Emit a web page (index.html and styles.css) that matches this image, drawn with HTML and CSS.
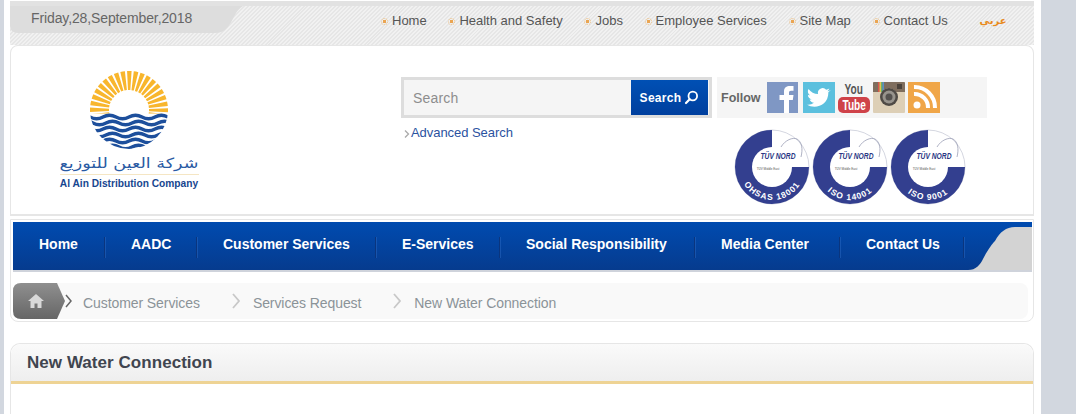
FILE: index.html
```html
<!DOCTYPE html>
<html lang="en">
<head>
<meta charset="utf-8">
<title>New Water Connection</title>
<link rel="stylesheet" href="styles.css">
</head>
<body>
<div class="page">
<div class="sheet">
  <div class="topstrip"></div>
  <div class="topbar">
    <div class="datetab">Friday,28,September,2018</div>
    <nav class="toplinks">
      <a class="toplink"><i class="bullet"></i>Home</a>
      <a class="toplink"><i class="bullet"></i>Health and Safety</a>
      <a class="toplink"><i class="bullet"></i>Jobs</a>
      <a class="toplink"><i class="bullet"></i>Employee Services</a>
      <a class="toplink"><i class="bullet"></i>Site Map</a>
      <a class="toplink"><i class="bullet"></i>Contact Us</a>
      <a class="arabic" lang="ar">عربي</a>
    </nav>
  </div>

  <header class="headcard">
    <div class="logocol">
      <svg class="logo" width="160" height="130" viewBox="0 0 160 130">
        <defs>
          <clipPath id="sunclip"><rect x="30" y="0" width="100" height="48.500"/></clipPath>
          <clipPath id="waveclip"><circle cx="79" cy="45" r="39"/></clipPath>
        </defs>
        <circle cx="79" cy="45" r="29.500" fill="none" stroke="#f8b62d" stroke-width="19" stroke-dasharray="3.500 1.650" stroke-dashoffset="1.750" clip-path="url(#sunclip)"/>
        <g clip-path="url(#waveclip)" fill="none" stroke="#1d4f9c" stroke-width="3.300">
          <path d="M27 52q6.500-3.500 13 0t13 0 13 0 13 0 13 0 13 0 13 0 13 0"/>
          <path d="M30 58q6.500-3.500 13 0t13 0 13 0 13 0 13 0 13 0 13 0 13 0"/>
          <path d="M27 64q6.500-3.500 13 0t13 0 13 0 13 0 13 0 13 0 13 0 13 0"/>
          <path d="M30 70q6.500-3.500 13 0t13 0 13 0 13 0 13 0 13 0 13 0 13 0"/>
          <path d="M27 76q6.500-3.500 13 0t13 0 13 0 13 0 13 0 13 0 13 0 13 0"/>
          <path d="M30 82q6.500-3.500 13 0t13 0 13 0 13 0 13 0 13 0 13 0 13 0"/>
        </g>
        <text class="logo-ar" x="79" y="103" text-anchor="middle" lang="ar" direction="rtl" textLength="139" lengthAdjust="spacingAndGlyphs">شركة العين للتوزيع</text>
        <rect x="10" y="109" width="139" height="1" fill="#f5e6c4"/>
        <text class="logo-en" x="79" y="122" text-anchor="middle">Al Ain Distribution Company</text>
      </svg>
    </div>
    <div class="searchcol">
      <form class="searchbox">
        <span class="searchfield">Search</span>
        <span class="searchbtn">Search
          <svg width="15" height="15" viewBox="0 0 15 15"><circle cx="8.800" cy="6" r="4.300" fill="none" stroke="#fff" stroke-width="1.800"/><path d="M5.700 9.200 2 13" stroke="#fff" stroke-width="2.200" stroke-linecap="round"/></svg>
        </span>
      </form>
      <a class="advanced"><svg class="advchev" width="6" height="8" viewBox="0 0 6 8"><path d="M1 .5 4.500 4 1 7.500" fill="none" stroke="#aaa" stroke-width="1.300"/></svg>Advanced Search</a>
    </div>
    <div class="socialcol">
      <div class="follow">
        <span class="followlabel">Follow</span>
        <svg class="soc" width="31" height="31" viewBox="0 0 31 31"><rect width="31" height="31" fill="#7f97c4"/><path d="M17 31V18h-4.500v-5H17V9.500C17 5.500 19.500 4 23 4h3.500v4.800H24c-1.500 0-2 .7-2 2V13h4.500l-.7 5H22v13z" fill="#fff"/></svg>
        <svg class="soc soc-tw" width="32" height="31" viewBox="0 0 32 31"><rect width="32" height="31" fill="#5cc0de"/><path d="M27 8.500c-1 .5-1.800.7-2.800.8 1-.6 1.800-1.500 2.100-2.700-1 .6-2 1-3.100 1.200a4.700 4.700 0 0 0-8.100 4.300C11.300 12 7.700 10 5.500 7c-1.300 2.100-.6 4.900 1.500 6.300-.8 0-1.500-.2-2.100-.6 0 2.300 1.600 4.300 3.800 4.700-.7.200-1.400.2-2.100.1.600 1.900 2.400 3.200 4.400 3.300-2 1.500-4.300 2.200-6.900 1.900 7 4.400 21.400 2 21.300-12.600 1-.6 1.800-1.400 2.600-2.100z" fill="#fff"/></svg>
        <span class="yt"><span class="yt-you">You</span><span class="yt-tube"><span class="yt-tubetext">Tube</span></span></span>
        <svg class="soc soc-ig" width="32" height="31" viewBox="0 0 32 31"><rect width="32" height="31" rx="1" fill="#ddcfb6"/><path d="M0 1q0-1 1-1h30q1 0 1 1v9H23a8.500 8.500 0 0 0-14 0H0z" fill="#7f6e5e"/><rect x="5" y="0" width="1.500" height="10" fill="#d9534f"/><rect x="6.500" y="0" width="1.500" height="10" fill="#e9c04c"/><rect x="8" y="0" width="1.500" height="10" fill="#6cb36a"/><rect x="9.500" y="0" width="1.500" height="10" fill="#5a8fc7"/><circle cx="16" cy="15" r="9" fill="#4f4a45"/><circle cx="16" cy="15" r="6.500" fill="#97938c"/><circle cx="16" cy="15" r="3.500" fill="#54514e"/><rect x="24" y="2" width="5" height="5" fill="#4a423b"/></svg>
        <svg class="soc soc-rs" width="32" height="31" viewBox="0 0 32 31"><rect width="32" height="31" fill="#f0a648"/><circle cx="9" cy="23" r="3.500" fill="#fff"/><path d="M6 12a13.500 13.500 0 0 1 14 14M6 5a20.500 20.500 0 0 1 21 21" fill="none" stroke="#fff" stroke-width="4"/></svg>
      </div>
      <div class="badges">
        <svg class="badge" width="78" height="76" viewBox="0 0 78 76">
          <use href="#badgeart"/>
          <path id="arc1" d="M6 38a33 33 0 0 0 66 0" fill="none"/>
          <text class="badge-ring"><textPath href="#arc1" startOffset="50%" text-anchor="middle">OHSAS 18001</textPath></text>
        </svg>
        <svg class="badge" width="78" height="76" viewBox="0 0 78 76">
          <defs>
            <g id="badgeart">
              <circle cx="39" cy="38" r="37" fill="#fff" stroke="#c9cbd8" stroke-width=".8"/>
              <path d="M39 1A37 37 0 1 0 76 38H39z" fill="#333f8f"/>
              <circle cx="39" cy="38" r="20" fill="#fff"/>
              <path d="M48 18C52 11 60 8 64 10 69 13 70 20 68 28" fill="none" stroke="#9a9eb5" stroke-width=".8"/>
              <text class="badge-tuv" x="45" y="29.500" text-anchor="middle" textLength="35" lengthAdjust="spacingAndGlyphs">TÜV NORD</text>
              <text class="badge-sub" x="35" y="41" text-anchor="middle">TÜV Middle East</text>
            </g>
          </defs>
          <use href="#badgeart"/>
          <path id="arc2" d="M6 38a33 33 0 0 0 66 0" fill="none"/>
          <text class="badge-ring"><textPath href="#arc2" startOffset="50%" text-anchor="middle">ISO 14001</textPath></text>
        </svg>
        <svg class="badge" width="78" height="76" viewBox="0 0 78 76">
          <use href="#badgeart"/>
          <path id="arc3" d="M6 38a33 33 0 0 0 66 0" fill="none"/>
          <text class="badge-ring"><textPath href="#arc3" startOffset="50%" text-anchor="middle">ISO 9001</textPath></text>
        </svg>
      </div>
    </div>
  </header>

  <section class="navcard">
    <nav class="mainnav">
      <a class="navitem">Home</a>
      <a class="navitem">AADC</a>
      <a class="navitem">Customer Services</a>
      <a class="navitem">E-Services</a>
      <a class="navitem">Social Responsibility</a>
      <a class="navitem">Media Center</a>
      <a class="navitem">Contact Us</a>
      <svg class="navwave" width="64" height="48" viewBox="0 0 64 48"><path d="M0 48C8 48 12 43 15 37 19 29 24 22 27 19 32 10 38 5 47 5H64V48z" fill="#d3d3d3"/></svg>
    </nav>
    <div class="crumbs">
      <a class="crumbhome">
        <svg width="16" height="14" viewBox="0 0 16 14"><path d="M8 0 0 7h2.500v7H6.500V9.500h3V14h4V7H16z" fill="#d8d8d8"/></svg>
      </a>
      <svg class="homechev" width="7" height="14" viewBox="0 0 7 14"><path d="M1 1 6 7 1 13" fill="none" stroke="#666" stroke-width="1.500"/></svg>
      <a class="crumb crumb-first">Customer Services</a>
      <svg class="chev" width="10" height="16" viewBox="0 0 10 16"><path d="M2 1 8 8 2 15" fill="none" stroke="#c8c8c8" stroke-width="1.800"/></svg>
      <a class="crumb">Services Request</a>
      <svg class="chev" width="10" height="16" viewBox="0 0 10 16"><path d="M2 1 8 8 2 15" fill="none" stroke="#c8c8c8" stroke-width="1.800"/></svg>
      <a class="crumb">New Water Connection</a>
    </div>
  </section>

  <section class="panel">
    <h1 class="paneltitle">New Water Connection</h1>
  </section>
</div>
</div>
</body>
</html>
```
FILE: styles.css
```css
* { box-sizing: border-box; }
html, body { margin: 0; padding: 0; background: #fff; }
body { font-family: "Liberation Sans", Arial, sans-serif; width: 1080px; height: 418px; overflow: hidden; }
a { text-decoration: none; color: inherit; }

.page { width: 1076px; height: 414px; background: #d2d7df; padding: 0 35px 0 4px; overflow: hidden; }
.sheet { width: 1037px; height: 414px; background: #fff; padding: 1px 7px 0 6px; overflow: hidden; }

.topstrip { height: 5px; background: #e2e2e2; }
.topbar {
  display: flex; height: 39px; align-items: flex-start;
  background: repeating-linear-gradient(135deg, #e6e6e6 0, #e6e6e6 1.400px, #f1f1f1 1.400px, #f1f1f1 2.800px);
}
.datetab {
  width: 233px; height: 27px; background: #dddddd; color: #666;
  font-size: 14px; line-height: 24px; padding-left: 21px; letter-spacing: -.12px;
  clip-path: path("M0 0H233C226 4 224 12 220 18 216 24 212 27 205 27H8Q0 27 0 19Z");
}
.toplinks { display: flex; margin-left: 138px; padding-top: 6px; font-size: 13px; line-height: 18px; color: #555; }
.toplink { display: flex; align-items: center; margin-right: 21.700px; white-space: nowrap; }
.bullet {
  width: 7px; height: 7px; margin-right: 4px; border: 1px dotted #efc48c; border-radius: 50%;
  background: radial-gradient(circle, #eaa552 0 1.500px, transparent 2px);
}
.arabic { color: #e88a1c; font-size: 10px; margin-left: 10px; font-family: "DejaVu Sans", sans-serif; font-weight: bold; }

.headcard {
  display: flex; height: 171px; border: 1px solid #e6e6e6; border-radius: 8px 8px 0 0; border-bottom-width: 2px;
}
.logocol { width: 390px; padding: 19px 0 0 39px; }
.logo { display: block; }
.logo-ar { font: 14px "DejaVu Sans", sans-serif; fill: #2a5aa3; }
.logo-en { font: bold 10.200px "Liberation Sans", sans-serif; fill: #17468f; }
.searchcol { width: 316px; padding-top: 31px; }
.searchbox { display: flex; width: 311px; height: 41px; border: 3px solid #dddddd; background: #f5f5f5; padding-right: 1px; }
.searchfield { flex: 1; padding-left: 9px; font-size: 14px; line-height: 37px; color: #8d8d8d; letter-spacing: .2px; }
.searchbtn {
  width: 77px; height: 35px; display: flex; align-items: center; justify-content: center; gap: 3px;
  background: linear-gradient(#0050b4, #003f9e); color: #fff; font-size: 12px; font-weight: bold; letter-spacing: .3px;
}
.advanced { display: flex; align-items: center; gap: 1px; margin: 7px 0 0 3px; font-size: 13px; line-height: 15px; color: #2b52a0; letter-spacing: -.05px; }
.advchev { margin-top: 3px; }

.socialcol { width: 270px; padding-top: 31px; }
.follow { display: flex; align-items: center; height: 41px; background: #f5f5f5; padding-left: 4px; }
.followlabel { width: 46px; font-size: 12.500px; font-weight: bold; color: #666; }
.soc { display: block; flex: none; }
.soc-tw { margin-left: 5px; }
.soc-ig { margin-left: 3px; }
.soc-rs { margin-left: 3px; }
.yt { width: 32px; margin-left: 3px; display: flex; flex-direction: column; align-items: center; }
.yt-you { font-size: 14px; line-height: 15px; color: #555; font-weight: bold; transform: scaleX(.72); }
.yt-tube { width: 32px; height: 16px; background: #cf4249; border-radius: 5px; color: #fff; text-align: center; font-size: 14px; font-weight: bold; line-height: 16px; }
.yt-tubetext { display: inline-block; transform: scaleX(.72); }
.badges { display: flex; margin: 11px 0 0 16px; }
.badge { display: block; flex: none; }
.badge-tuv { font: italic bold 9.500px "Liberation Sans", sans-serif; fill: #2b3784; }
.badge-sub { font: 3px "Liberation Sans", sans-serif; fill: #555; }
.badge-ring { font: bold 8.500px "Liberation Sans", sans-serif; fill: #fff; letter-spacing: 1px; }

.navcard {
  height: 103px; margin-top: 3px; padding: 2px 1px 0 2px;
  border: 1px solid #e6e6e6; border-radius: 0 0 8px 8px;
}
.mainnav {
  position: relative; display: grid; grid-template-columns: 92px 92px 179px 124px 195px 145px 124px; align-items: center; height: 50px;
  background: linear-gradient(#004bb0, #063b8e); border-bottom: 2px solid #cfd3db;
}
.navitem {
  height: 21px; line-height: 15px; margin-top: 3px; padding-left: 26px; border-right: 1px solid #0a357e;
  box-shadow: 1px 0 0 rgba(60, 120, 210, .35);
  font-size: 14px; font-weight: bold; color: #fff; white-space: nowrap;
}
.navwave { position: absolute; right: 0; top: 0; }
.crumbs {
  display: flex; align-items: center; width: 1015px; height: 36px; margin-top: 11px;
  background: #f9f9f9; border-radius: 8px; font-size: 14px; color: #8b9398; letter-spacing: -.08px;
}
.crumbhome {
  width: 52px; height: 36px; display: flex; align-items: center; padding-left: 15px;
  background: linear-gradient(#8f8f8f, #666); clip-path: path("M8 0H44L52 18 44 36H8Q0 36 0 28V8Q0 0 8 0Z");
}
.homechev { flex: none; }
.crumb { white-space: nowrap; margin-top: 4px; }
.crumb-first { margin-left: 11px; }
.chev { margin: 0 12px 0 31px; flex: none; }

.panel { height: 80px; margin-top: 21px; border: 1px solid #e6e6e6; border-bottom: 0; border-radius: 10px 10px 0 0; }
.paneltitle {
  margin: 0; height: 40px; padding-left: 16px; font-size: 17px; line-height: 38px; font-weight: bold; color: #40454f; letter-spacing: .05px;
  background: linear-gradient(#fafafa, #eeeeee); border-bottom: 3px solid #eed394; border-radius: 10px 10px 0 0;
}
```
